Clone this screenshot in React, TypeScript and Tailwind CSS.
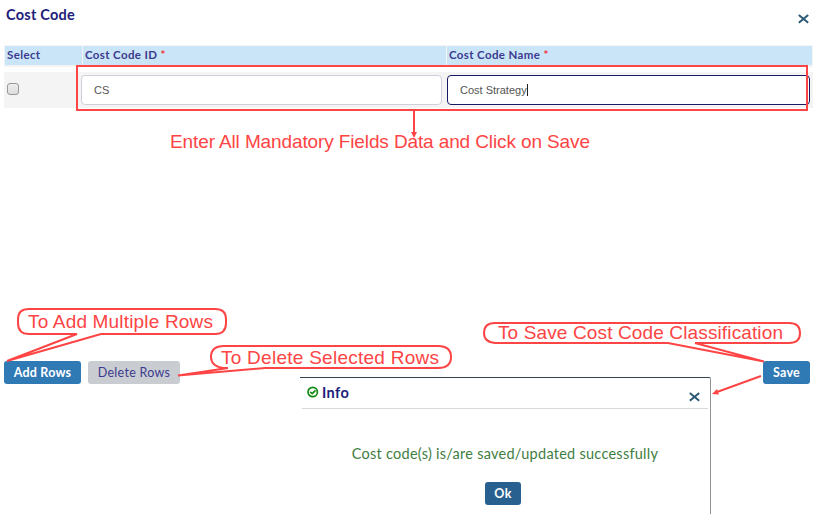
import React from "react";

function CloseIcon() {
  return (
    <svg width="11" height="10" viewBox="0 0 11 10" className="block">
      <path d="M0.8 0.9 L10.2 8.7 M10.2 0.9 L0.8 8.7" stroke="#2b5a74" strokeWidth="2" fill="none" />
    </svg>
  );
}

function HeaderCell({ label, required }: { label: string; required?: boolean }) {
  return (
    <div className="h-[19px] bg-[#cbe5f8] pl-[2px] text-[11.5px] leading-[17px] font-bold tracking-[0.37px] whitespace-nowrap text-[#3b3b8f]">
      {label}
      {required && <span className="text-[#f5333f]"> *</span>}
    </div>
  );
}

function Annotations() {
  return (
    <svg
      className="pointer-events-none absolute inset-0 z-20"
      width="817"
      height="514"
      viewBox="0 0 817 514"
      fill="none"
      stroke="#fe4444"
      strokeWidth="2"
    >
      <rect x="77" y="66" width="730" height="44" />
      <path d="M414 110 V133" />
      <path d="M411 132 H417 L414 138 Z" fill="#fe4444" stroke="none" />

      <path d="M77 334 H29 Q18 334 18 323 V319 Q18 309 29 309 H215 Q226 309 226 319 V323 Q226 334 215 334 H101 L7 361 Z" />
      <path d="M228 368 H223 Q211 366 211 357 Q211 346 224 346 H438 Q451 346 451 357 Q451 368 438 368 H265 L178 375.5 Z" />
      <path d="M668 343 H495 Q484 342 484 333 Q484 323 495 323 H789 Q800 323 800 333 Q800 343 789 343 H695 L764 361.5 Z" />

      <path d="M761 376 L717 392" />
      <path d="M712 394 L717 389 L719 394.5 Z" fill="#fe4444" stroke="none" />

      <g fill="#fe4444" stroke="none" fontSize="19" fontFamily="'Liberation Sans', Arial, sans-serif">
        <text x="170" y="148" textLength="420">Enter All Mandatory Fields Data and Click on Save</text>
        <text x="28" y="328" textLength="185">To Add Multiple Rows</text>
        <text x="221" y="364" textLength="218">To Delete Selected Rows</text>
        <text x="498" y="339" textLength="285">To Save Cost Code Classification</text>
      </g>
    </svg>
  );
}

export default function App() {
  return (
    <div className="relative h-[514px] w-[817px] overflow-hidden bg-white font-['Lato',sans-serif]">
      <header className="flex h-[45px] justify-between pr-[8px] pl-[6px]">
        <h1 className="pt-[5px] text-[14.5px] leading-[20px] font-bold tracking-[0.25px] text-[#20207a]">Cost Code</h1>
        <button className="h-fit pt-[14px]" aria-label="Close">
          <CloseIcon />
        </button>
      </header>

      <main className="flex h-[316px] flex-col gap-[5px] pr-[4px] pl-[4px]">
        <div className="grid h-[22px] grid-cols-[77px_363px_1fr] gap-x-px bg-[#f4f4f4] px-px pt-px">
          <HeaderCell label="Select" />
          <HeaderCell label="Cost Code ID" required />
          <HeaderCell label="Cost Code Name" required />
        </div>
        <div className="flex h-[36px] items-center bg-[#f4f4f4] pr-[3px]">
          <div className="w-[77px] pb-[2px] pl-[3px]">
            <div className="h-[12px] w-[12px] rounded-[3px] border border-[#999] bg-linear-to-b from-[#eee] to-[#dcdcdc]" />
          </div>
          <div className="flex h-[30px] w-[361px] items-center rounded-[4px] border border-[#cfd0dc] bg-white pl-[12px] font-['Liberation_Sans',Arial,sans-serif] text-[11px] text-[#555]">
            CS
          </div>
          <div className="ml-[5px] flex h-[30px] flex-1 items-center rounded-[4px] border border-[#191966] bg-white pl-[12px] font-['Liberation_Sans',Arial,sans-serif] text-[11px] text-[#555]">
            Cost Strategy
            <span className="h-[12px] w-px bg-[#222]" />
          </div>
        </div>
      </main>

      <footer className="flex items-start pr-[7px] pl-[4px] text-[12.5px] leading-[23px] tracking-[0.2px]">
        <button className="h-[23px] w-[77px] rounded-[3px] bg-[#2f79b5] text-center font-bold whitespace-nowrap text-white">Add Rows</button>
        <button className="ml-[7px] h-[23px] w-[92px] rounded-[3px] bg-[#c9ccd1] text-center tracking-[0.28px] whitespace-nowrap text-[#3b3b8f]">Delete Rows</button>
        <button className="ml-auto h-[23px] w-[47px] rounded-[3px] bg-[#2f79b5] text-center font-bold text-white">Save</button>
      </footer>

      <section className="absolute top-[377px] left-[300px] z-10 flex h-[137px] w-[411px] flex-col rounded-tr-[2px] border-t border-r border-t-[#34424f] border-r-[#8e9195] bg-white">
        <div className="mr-[2px] ml-[2px] flex h-[31px] items-center border-b border-[#d9d9d9] pr-[8px] pl-[5px]">
          <svg width="12" height="12" viewBox="0 0 12 12" fill="none" stroke="#108a10" className="mb-[2px]">
            <circle cx="5.7" cy="6" r="4.7" strokeWidth="1.7" />
            <path d="M3.2 5.8 L5.2 7.6 L8.5 4.3" strokeWidth="1.7" />
          </svg>
          <h2 className="ml-[3px] text-[14.5px] leading-[20px] font-bold tracking-[0.4px] text-[#20207a]">Info</h2>
          <button className="mt-[7px] ml-auto" aria-label="Close">
            <CloseIcon />
          </button>
        </div>
        <p className="mt-[35px] text-center text-[14.5px] leading-[20px] tracking-[0.26px] whitespace-nowrap text-[#3e7d41]">
          Cost code(s) is/are saved/updated successfully
        </p>
        <button className="mt-[18px] ml-[185px] h-[23px] w-[36px] rounded-[3px] bg-[#286090] text-center text-[12.5px] leading-[23px] font-bold tracking-[0.4px] text-white">
          Ok
        </button>
      </section>

      <Annotations />
    </div>
  );
}
